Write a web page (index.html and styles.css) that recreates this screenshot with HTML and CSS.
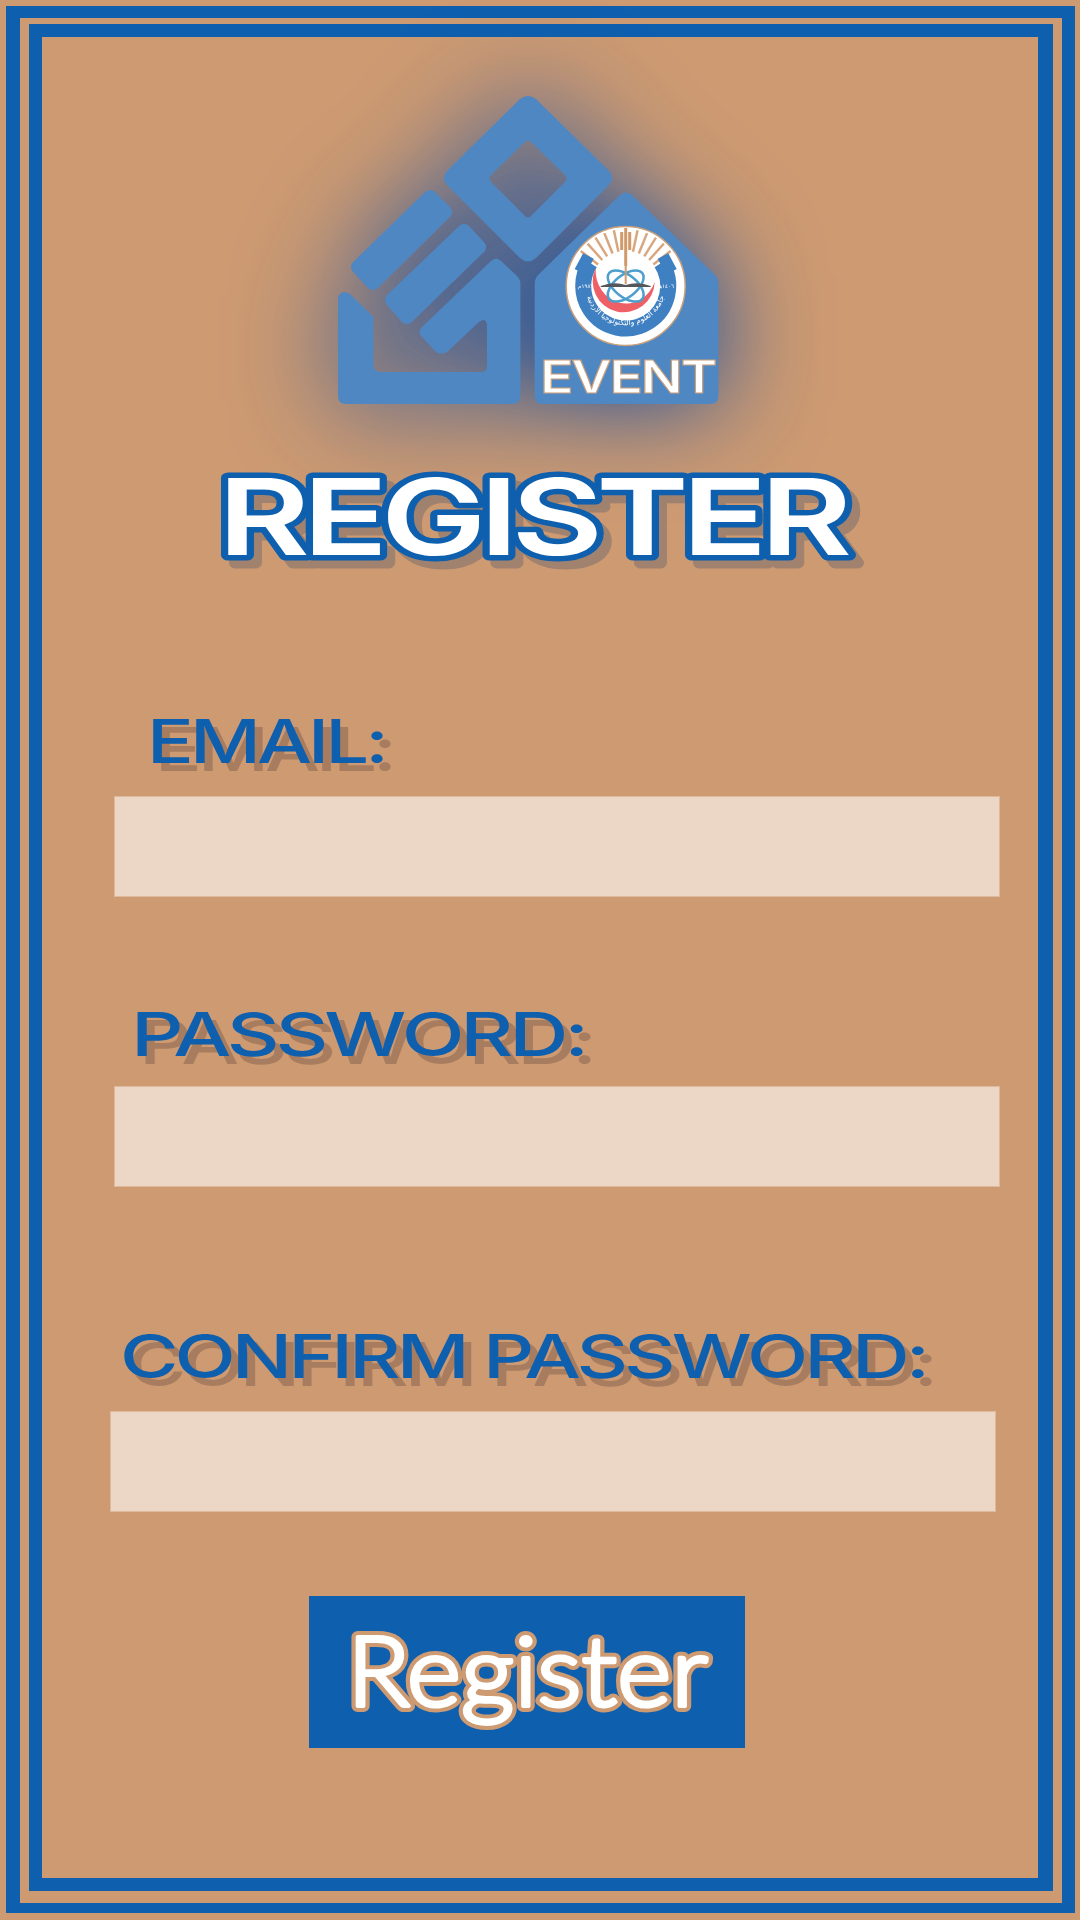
FILE: index.html
```html
<!DOCTYPE html>
<html lang="en">
<head>
  <meta charset="UTF-8">
  <meta name="viewport" content="width=device-width, initial-scale=1.0">
  <title>Register</title>
  <link rel="stylesheet" href="styles.css">
</head>
<body>

  <div class="frame-outer">
    <div class="frame-inner">

      <svg class="logo" viewBox="300 90 440 320" width="440" height="320">
        <g class="logo-shape">
          <path fill-rule="evenodd" d="M520 99 Q528 93 536 99 L608 170 Q616 178 608 186 L536 258 Q528 265 520 258 L448 186 Q440 178 448 170 Z M524 143 Q528 138 532 143 L564 174 Q569 178 564 183 L532 215 Q528 220 524 215 L492 183 Q487 178 492 174 Z"/>
          <path class="logo-bar" d="M430 197 L445 212 L373 283 L358 267 Z"/>
          <path class="logo-bar" d="M464 231 L479 247 L407 317 L392 300 Z"/>
          <path d="M338 297 Q342 289 350 294 L373.5 317 L373.5 365 Q373.5 372 381 372 L481 372 Q487 372 487 366 L487 325 Q486 317 479 322 L447 352 Q441 356 435 351 L422 337 Q417 332 422 327 L491 261 Q496 256 501 261 L517 276 Q520.4 279 520.4 284 L520.4 396 Q520.4 404 512 404 L346 404 Q338 404 338 396 Z"/>
          <path d="M619 196 Q626 189 633 196 L714 274 Q718.4 278 718.4 284 L718.4 396 Q718.4 404 710 404 L543 404 Q534.7 404 534.7 396 L534.7 284 Q534.7 278 539 274 Z"/>
        </g>

        <g transform="translate(625.7 286)">
          <circle r="59.5" class="seal-disc"/>
          <g class="seal-rays">
            <path d="M0 -35V-57" transform="rotate(-52)"/>
            <path d="M0 -35V-57" transform="rotate(-42)"/>
            <path d="M0 -35V-57" transform="rotate(-32)"/>
            <path d="M0 -35V-57" transform="rotate(-22)"/>
            <path d="M0 -35V-57" transform="rotate(-12)"/>
            <path d="M0 -35V-57" transform="rotate(12)"/>
            <path d="M0 -35V-57" transform="rotate(22)"/>
            <path d="M0 -35V-57" transform="rotate(32)"/>
            <path d="M0 -35V-57" transform="rotate(42)"/>
            <path d="M0 -35V-57" transform="rotate(52)"/>
          </g>
          <g class="seal-wheat">
            <path d="M0 -20V-58"/>
            <path d="M-4 -54V-36M4 -54V-36"/>
          </g>
          <circle r="42.5" class="seal-gear" pathLength="360" stroke-dasharray="246 114" transform="rotate(-33)"/>
          <g class="seal-teeth">
            <rect x="-9" y="-53" width="18" height="12" transform="rotate(-62)"/>
            <rect x="-9" y="-53" width="18" height="12" transform="rotate(62)"/>
          </g>
          <path class="seal-moon" d="M-30 -18 A31 31 0 1 0 29 -4 A30.5 33 0 0 1 -30 -18 Z"/>
          <g class="seal-atom">
            <ellipse rx="21" ry="11" transform="rotate(38)"/>
            <ellipse rx="21" ry="11" transform="rotate(-38)"/>
          </g>
          <path class="seal-stem" d="M0 -20V-2"/>
          <path class="seal-book" d="M-25 0 Q-12 -5 0 -1 Q12 -5 25 0 L25 1 L-25 1 Z"/>
          <path id="seal-arc" fill="none" d="M-40 5 A40.5 40.5 0 0 0 40 5"/>
          <text class="seal-text"><textPath href="#seal-arc" startOffset="50%">جامعة العلوم والتكنولوجيا الأردنية</textPath></text>
          <text class="seal-year" x="-40" y="2">١٩٨٦م</text>
          <text class="seal-year" x="40" y="2">١٤٠٦هـ</text>
        </g>

        <text class="logo-event" x="540" y="393" textLength="175" lengthAdjust="spacingAndGlyphs">EVENT</text>
      </svg>

      <h1 class="title">
        <svg viewBox="0 0 660 110" width="660" height="110">
          <text x="8" y="90" textLength="627" lengthAdjust="spacingAndGlyphs">REGISTER</text>
        </svg>
      </h1>

      <div class="field field-email">
        <label for="email">
          <svg viewBox="0 0 900 70" width="900" height="70">
            <text x="47" y="55" textLength="238" lengthAdjust="spacingAndGlyphs">EMAIL:</text>
          </svg>
        </label>
        <input type="email" id="email">
      </div>

      <div class="field field-password">
        <label for="password">
          <svg viewBox="0 0 900 70" width="900" height="70">
            <text x="31" y="55" textLength="454" lengthAdjust="spacingAndGlyphs">PASSWORD:</text>
          </svg>
        </label>
        <input type="password" id="password">
      </div>

      <div class="field field-confirm">
        <label for="confirm">
          <svg viewBox="0 0 900 70" width="900" height="70">
            <text x="20" y="55" textLength="806" lengthAdjust="spacingAndGlyphs">CONFIRM PASSWORD:</text>
          </svg>
        </label>
        <input type="password" id="confirm">
      </div>

      <button class="btn-register" type="button">
        <svg viewBox="0 0 436 152" width="436" height="152">
          <g class="btn-label-outline">
            <text id="btn-label" x="38" y="110" textLength="361" lengthAdjust="spacingAndGlyphs">Register</text>
          </g>
          <use href="#btn-label" class="btn-label-top"/>
        </svg>
      </button>

    </div>
  </div>

</body>
</html>
```

FILE: styles.css
```css
* {
  box-sizing: border-box;
}

body {
  margin: 0;
  height: 1920px;
  background: #cd9a72;
  font-family: Inter, "Liberation Sans", sans-serif;
  overflow: hidden;
}

svg {
  display: block;
  overflow: visible;
}

.frame-outer {
  margin: 6px 5px 7px 6px;
  height: 1907px;
  border: solid #0e5fae;
  border-width: 12px 13px 10px 14px;
  padding: 6px 9px 12px 9px;
}

.frame-inner {
  height: 100%;
  border: solid #0e5fae;
  border-width: 13px 15px 13px 13px;
  display: flex;
  flex-direction: column;
  align-items: flex-start;
}

/* logo */
.logo {
  margin: 53px 0 0 258px;
  filter: drop-shadow(0 0 50px rgba(14, 75, 160, 0.95));
}

.logo-shape path {
  fill: #4f87c3;
}

.logo-shape .logo-bar {
  stroke: #4f87c3;
  stroke-width: 14px;
  stroke-linejoin: round;
}

.seal-disc {
  fill: #fff;
  stroke: #c9a07c;
  stroke-width: 1.5px;
}

.seal-rays path {
  stroke: #d8a77f;
  stroke-width: 2.5px;
}

.seal-wheat path {
  fill: none;
  stroke: #d29a6b;
  stroke-width: 3px;
}

.seal-gear {
  fill: none;
  stroke: #3f80c2;
  stroke-width: 16px;
}

.seal-teeth rect {
  fill: #3f80c2;
}

.seal-moon {
  fill: #ef5f66;
}

.seal-atom ellipse {
  fill: none;
  stroke: #4d9fcd;
  stroke-width: 2.5px;
}

.seal-stem {
  stroke: #d29a6b;
  stroke-width: 2px;
}

.seal-book {
  fill: #55565a;
}

.seal-text {
  fill: #fff;
  font-family: "DejaVu Sans", sans-serif;
  font-size: 7.5px;
  text-anchor: middle;
}

.seal-year {
  fill: #fff;
  font-family: "DejaVu Sans", sans-serif;
  font-size: 5.5px;
  text-anchor: middle;
}

.logo-event {
  fill: #fff;
  stroke: #c9a07c;
  stroke-width: 1px;
  font-size: 45px;
  font-weight: 600;
  letter-spacing: -0.04em;
}

/* heading */
.title {
  margin: 55px 0 0 168px;
  font-size: 106px;
  font-weight: 600;
  line-height: 1;
  letter-spacing: -0.05em;
}

.title svg {
  filter: drop-shadow(8px 8px 0 rgba(95, 95, 105, 0.4));
}

.title text {
  fill: #fff;
  stroke: #0e5fae;
  stroke-width: 11px;
  stroke-linejoin: round;
  paint-order: stroke fill;
}

/* form */
.field label {
  display: block;
  margin-left: 58px;
  margin-bottom: 18px;
}

.field svg {
  filter: drop-shadow(8px 8px 0 #a87c5e);
}

.field text {
  fill: #0e5fae;
  font-size: 60px;
  font-weight: 500;
  letter-spacing: -0.05em;
}

.field input {
  display: block;
  width: 886px;
  height: 101px;
  margin-left: 72px;
  border: 1px solid #dfb99b;
  border-radius: 0;
  background: #ecd6c5;
}

.field-email {
  margin-top: 133px;
}

.field-password {
  margin-top: 104px;
}

.field-password label {
  margin-bottom: 15px;
}

.field-confirm {
  margin-top: 136px;
}

.field-confirm input {
  margin-left: 68px;
}

.btn-register {
  display: block;
  width: 436px;
  height: 152px;
  margin: 84px 0 0 267px;
  padding: 0;
  border: 0;
  background: #0e5fae;
}

.btn-register text {
  fill: #fff;
  stroke-linejoin: round;
  stroke-linecap: round;
  paint-order: stroke fill;
  font-family: Lato, sans-serif;
  font-size: 97px;
  font-weight: 300;
}

.btn-label-outline {
  stroke: #cd9a72;
  stroke-width: 12px;
}

.btn-label-top {
  stroke: #fff;
  stroke-width: 4px;
}
```
